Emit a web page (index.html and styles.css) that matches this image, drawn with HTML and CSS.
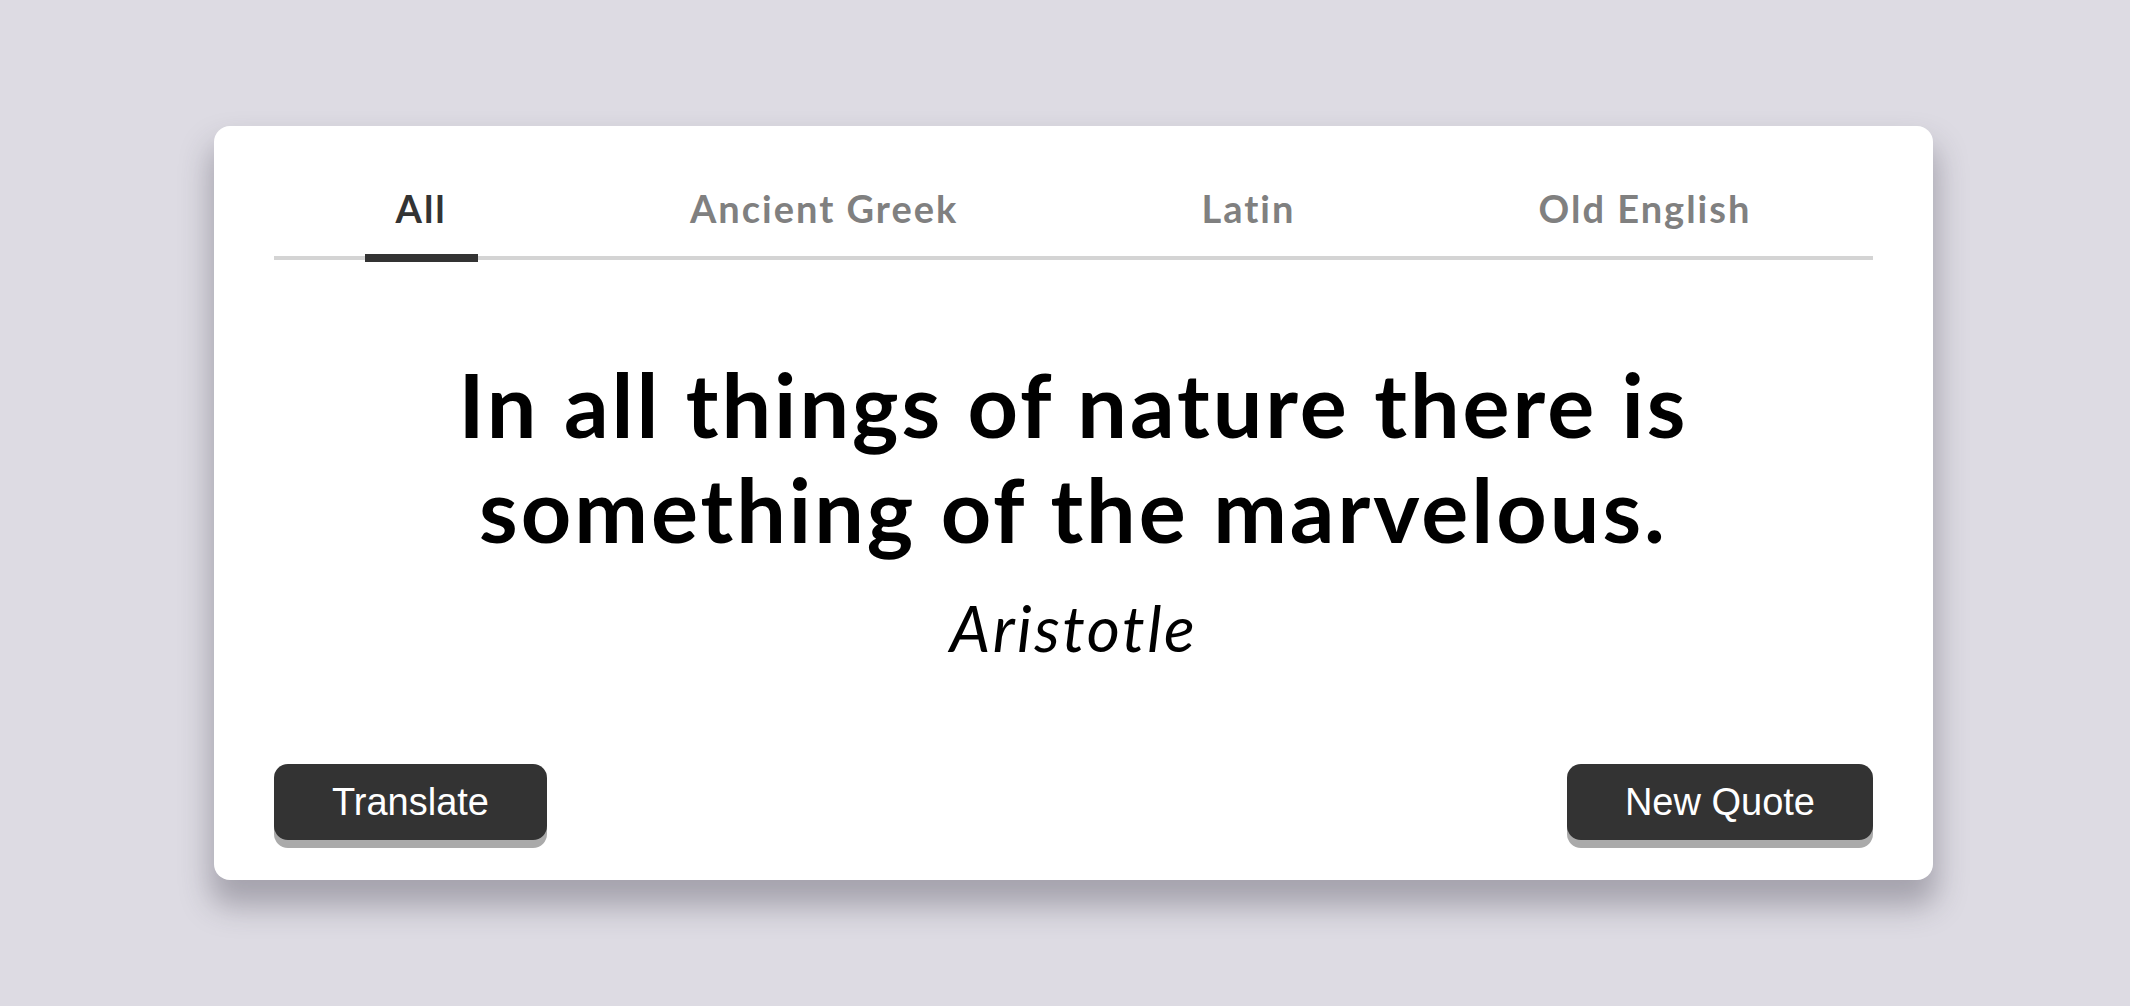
FILE: index.html
```html
<!DOCTYPE html>
<html lang="en">
<head>
<meta charset="utf-8">
<title>Quote Machine</title>
<link rel="stylesheet" href="styles.css">
</head>
<body>
<main class="card">
  <nav class="tabs">
    <button class="tab tab--active">All</button>
    <button class="tab">Ancient Greek</button>
    <button class="tab">Latin</button>
    <button class="tab">Old English</button>
  </nav>
  <section class="quote">
    <h1 class="quote__text">In all things of nature there is something of the marvelous.</h1>
    <p class="quote__author">Aristotle</p>
  </section>
  <div class="actions">
    <button class="btn">Translate</button>
    <button class="btn">New Quote</button>
  </div>
</main>
</body>
</html>
```

FILE: styles.css
```css
* { box-sizing: border-box; }

html, body {
  margin: 0;
  height: 100%;
}

body {
  background: #dddbe3;
  font-family: Lato, "Noto Sans", sans-serif;
  padding: 126px 197px 0 214px;
}

.card {
  background: #fff;
  border-radius: 16px;
  height: 754px;
  padding: 60px 60px 0 60px;
  box-shadow: 0 22px 30px 4px rgba(60, 55, 70, 0.34);
  display: flex;
  flex-direction: column;
}

.tabs {
  display: flex;
  justify-content: space-around;
  border-bottom: 4px solid #d4d4d4;
}

.tab {
  font-family: Lato, "Noto Sans", sans-serif;
  font-size: 38px;
  font-weight: 700;
  line-height: 1.2;
  color: #808080;
  background: none;
  border: none;
  border-bottom: 8px solid transparent;
  margin-bottom: -6px;
  padding: 0 31px 22px;
  letter-spacing: 2px;
}

.tab--active {
  color: #333;
  border-bottom-color: #333;
}

.quote {
  text-align: center;
  margin-top: 92px;
}

.quote__text {
  font-size: 88px;
  font-weight: 700;
  line-height: 1.2;
  letter-spacing: 3px;
  margin: 0 auto;
  max-width: 1400px;
  color: #000;
}

.quote__author {
  font-size: 64px;
  font-style: italic;
  font-weight: 400;
  line-height: 1.2;
  letter-spacing: 2.5px;
  margin: 27px 0 0;
  color: #000;
}

.actions {
  display: flex;
  justify-content: space-between;
  margin-top: auto;
  margin-bottom: 40px;
}

.btn {
  font-family: "Liberation Sans", Arial, sans-serif;
  font-size: 38px;
  color: #fff;
  background: #333;
  border: none;
  border-radius: 14px;
  height: 76px;
  padding: 0 58px;
  box-shadow: 0 8px 0 #aaa;
}
```
